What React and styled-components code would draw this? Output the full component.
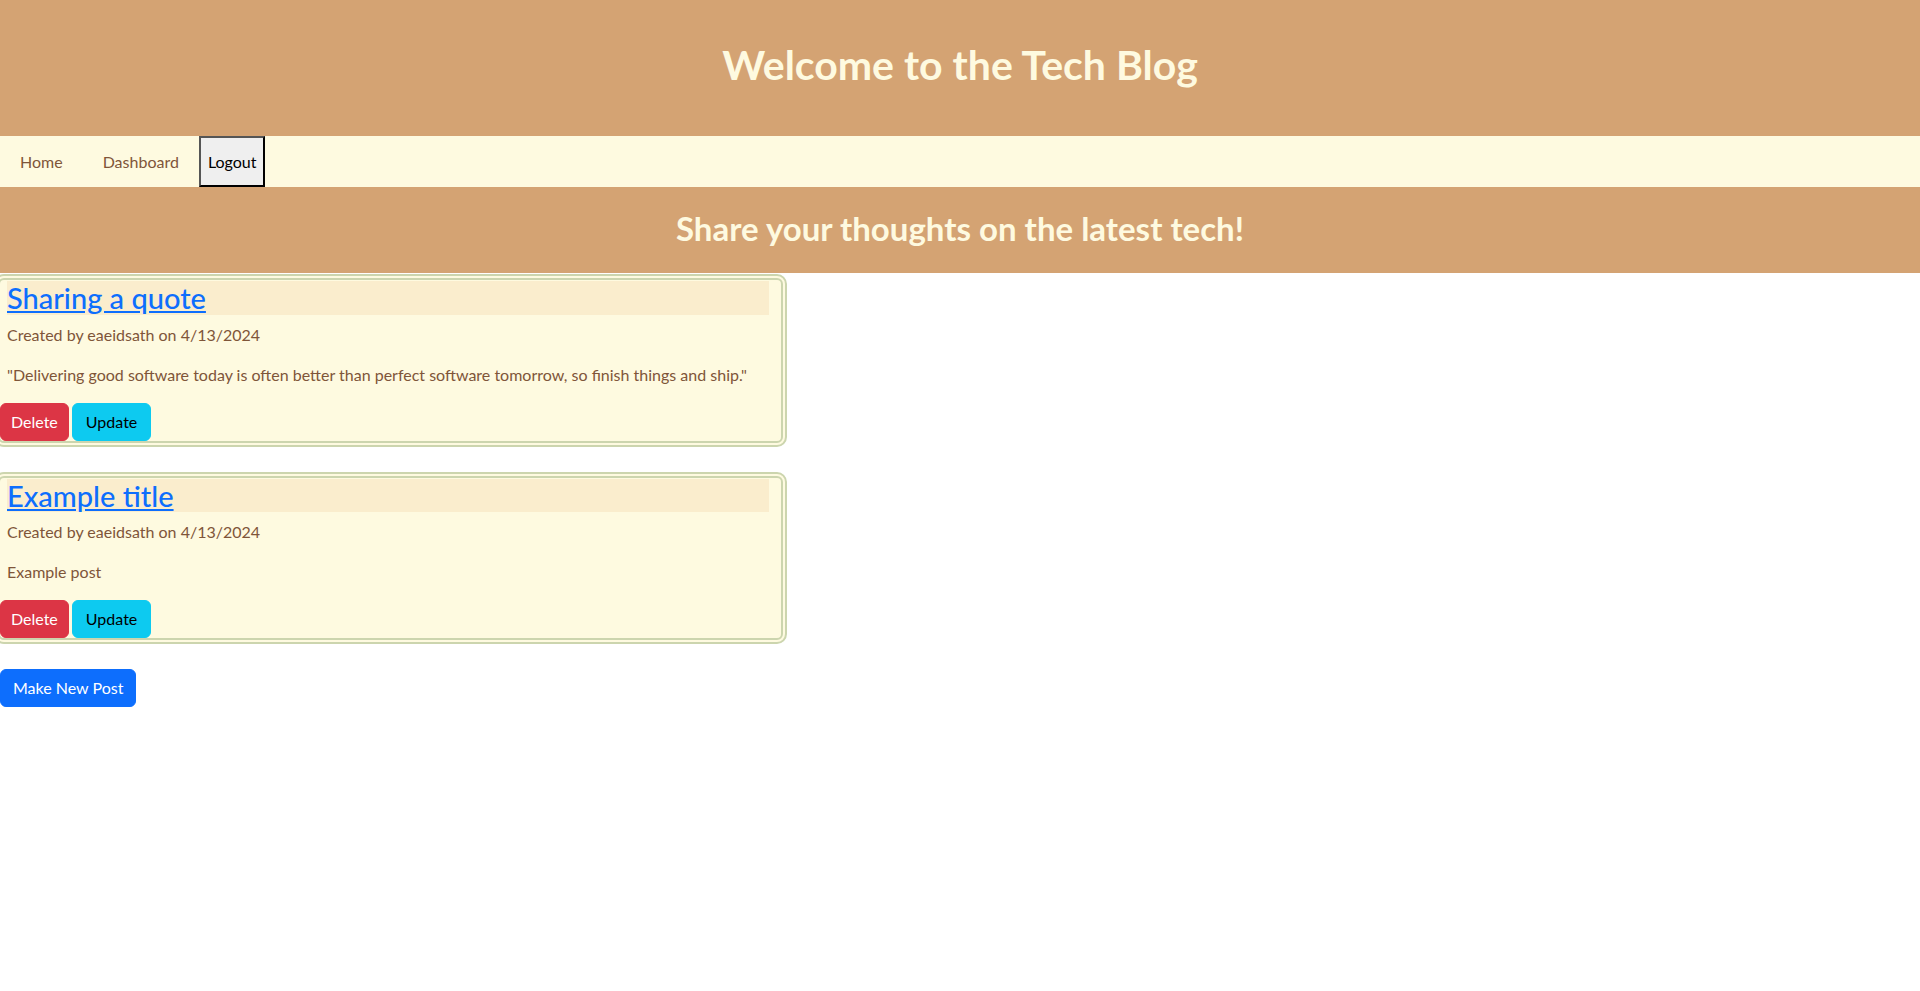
import { createGlobalStyle, styled } from "styled-components";

const GlobalStyle = createGlobalStyle`
  * {
    box-sizing: border-box;
  }
  body {
    margin: 0;
    background: #ffffff;
    font-family: Lato, "Noto Sans", sans-serif;
    font-size: 16px;
    line-height: 1.5;
    color: #7f5539;
  }
`;

const posts = [
  {
    id: 1,
    title: "Sharing a quote",
    author: "eaeidsath",
    date: "4/13/2024",
    body: "\"Delivering good software today is often better than perfect software tomorrow, so finish things and ship.\"",
  },
  {
    id: 2,
    title: "Example title",
    author: "eaeidsath",
    date: "4/13/2024",
    body: "Example post",
  },
];

const App = () => {
  return (
    <>
      <GlobalStyle />
      <Header>
        <h1>Welcome to the Tech Blog</h1>
      </Header>
      <Nav>
        <NavLink href="#">Home</NavLink>
        <NavLink href="#">Dashboard</NavLink>
        <LogoutButton>Logout</LogoutButton>
      </Nav>
      <Banner>
        <h2>Share your thoughts on the latest tech!</h2>
      </Banner>
      <Main>
        {posts.map((post) => (
          <PostCard key={post.id}>
            <TitleBar>
              <a href="#">{post.title}</a>
            </TitleBar>
            <Meta>
              Created by {post.author} on {post.date}
            </Meta>
            <Body>{post.body}</Body>
            <Actions>
              <Btn $variant="danger">Delete</Btn>
              <Btn $variant="info">Update</Btn>
            </Actions>
          </PostCard>
        ))}
        <Btn $variant="primary">Make New Post</Btn>
      </Main>
    </>
  );
};

export default App;

const Header = styled.header`
  height: 136px;
  background-color: #d4a373;
  display: flex;
  justify-content: center;
  align-items: center;

  h1 {
    margin: 0 0 6px;
    font-size: 41px;
    font-weight: 700;
    line-height: 1.2;
    color: #fefae0;
  }
`;

const Nav = styled.nav`
  height: 51px;
  background-color: #fefae0;
  display: flex;
  align-items: stretch;
`;

const NavLink = styled.a`
  display: flex;
  align-items: center;
  padding: 0 20px;
  color: #7f5539;
  text-decoration: none;
  font-size: 16px;
`;

const LogoutButton = styled.button`
  font-family: inherit;
  font-size: 16px;
  color: #000000;
  background-color: #efefef;
  border: 2px solid;
  border-color: #555555 #000000 #000000 #555555;
  padding: 0 7px;
`;

const Banner = styled.section`
  height: 86px;
  background-color: #d4a373;
  display: flex;
  justify-content: center;
  align-items: center;

  h2 {
    margin: 0 0 2px;
    font-size: 33px;
    font-weight: 700;
    line-height: 1.2;
    color: #fefae0;
  }
`;

const Main = styled.main`
  padding-top: 1px;
  display: flex;
  flex-direction: column;
  align-items: flex-start;
`;

const PostCard = styled.article`
  width: 793px;
  margin: 0 0 25px -6px;
  padding: 1px 12px 0 7px;
  border: 6px double #ccd5ae;
  border-radius: 10px;
  background-color: #fefae0;
`;

const TitleBar = styled.h3`
  margin: 0 0 8px;
  background-color: #faedcd;
  font-size: 29px;
  font-weight: 500;
  line-height: 1.16;

  a {
    color: #0d6efd;
    text-decoration: underline;
  }
`;

const Meta = styled.p`
  margin: 0 0 16px;
`;

const Body = styled.p`
  margin: 0 0 16px;
`;

const Actions = styled.div`
  display: flex;
  gap: 3px;
  margin-left: -7px;
`;

const variants = {
  danger: { bg: "#dc3545", fg: "#ffffff", pad: "10px" },
  info: { bg: "#0dcaf0", fg: "#000000", pad: "13px" },
  primary: { bg: "#0d6efd", fg: "#ffffff", pad: "12px" },
};

const Btn = styled.button`
  font-family: inherit;
  font-size: 16px;
  line-height: 24px;
  padding: 6px ${(p) => variants[p.$variant].pad};
  border: 1px solid ${(p) => variants[p.$variant].bg};
  border-radius: 6px;
  background-color: ${(p) => variants[p.$variant].bg};
  color: ${(p) => variants[p.$variant].fg};
  cursor: pointer;
`;
